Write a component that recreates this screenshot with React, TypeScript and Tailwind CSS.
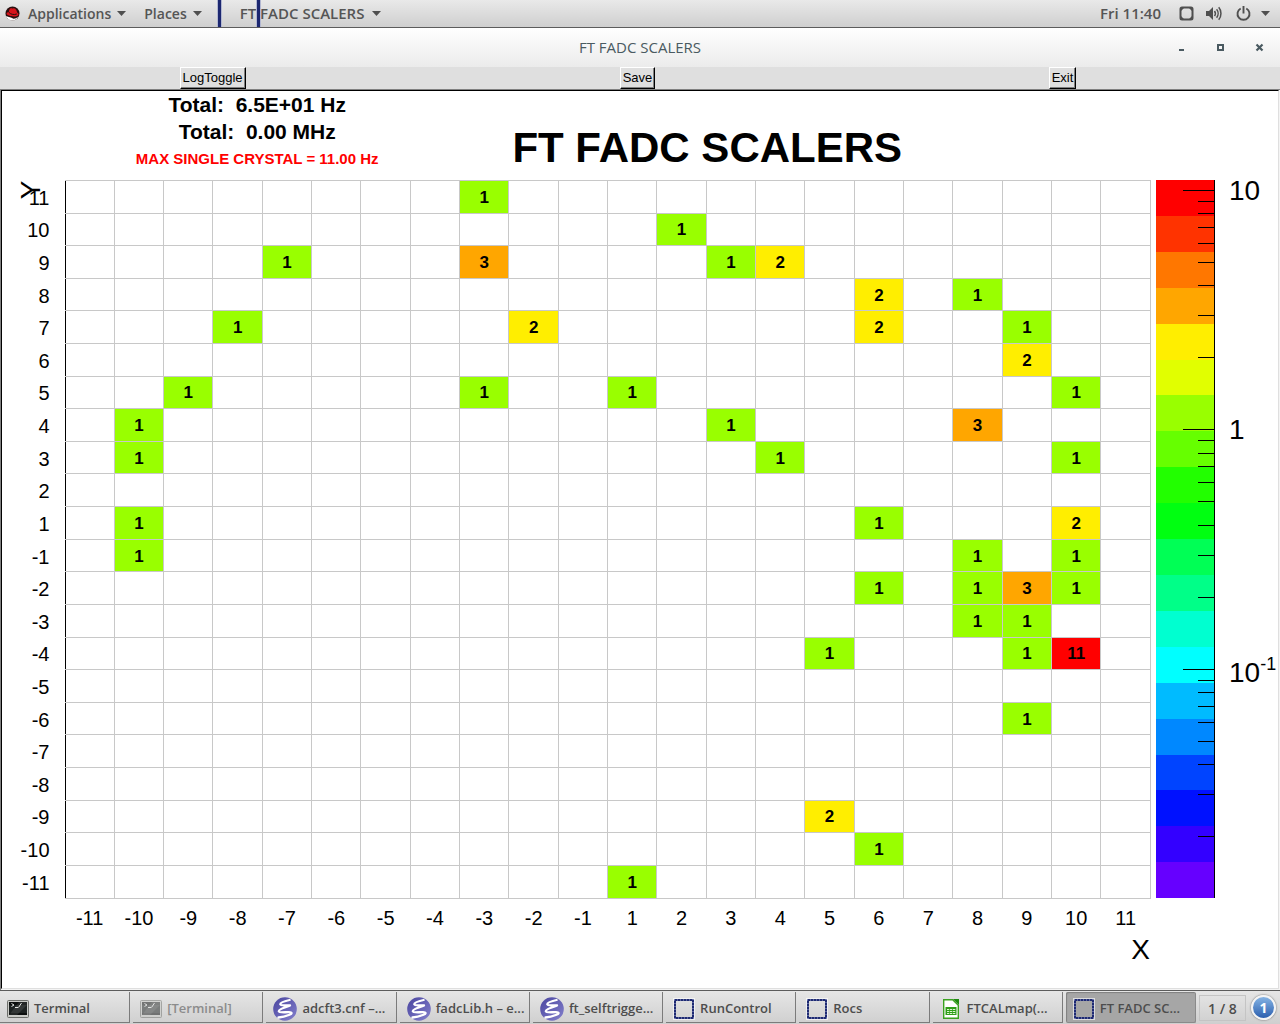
import React from "react";

const AXIS = [-11, -10, -9, -8, -7, -6, -5, -4, -3, -2, -1, 1, 2, 3, 4, 5, 6, 7, 8, 9, 10, 11];
const ROWS = [...AXIS].reverse();

// rates[y][x] in Hz
const RATES: Record<number, Record<number, number>> = {
  11: { [-3]: 1 },
  10: { 2: 1 },
  9: { [-7]: 1, [-3]: 3, 3: 1, 4: 2 },
  8: { 6: 2, 8: 1 },
  7: { [-8]: 1, [-2]: 2, 6: 2, 9: 1 },
  6: { 9: 2 },
  5: { [-9]: 1, [-3]: 1, 1: 1, 10: 1 },
  4: { [-10]: 1, 3: 1, 8: 3 },
  3: { [-10]: 1, 4: 1, 10: 1 },
  1: { [-10]: 1, 6: 1, 10: 2 },
  [-1]: { [-10]: 1, 8: 1, 10: 1 },
  [-2]: { 6: 1, 8: 1, 9: 3, 10: 1 },
  [-3]: { 8: 1, 9: 1 },
  [-4]: { 5: 1, 9: 1, 10: 11 },
  [-6]: { 9: 1 },
  [-9]: { 5: 2 },
  [-10]: { 6: 1 },
  [-11]: { 1: 1 },
};

const FILL: Record<number, string> = {
  1: "bg-[#99ff00]",
  2: "bg-[#ffee00]",
  3: "bg-[#ffa600]",
  11: "bg-[#ff0000]",
};

const BANDS = [
  "bg-[#ff0000]", "bg-[#ff3300]", "bg-[#ff7700]", "bg-[#ffa600]", "bg-[#ffee00]",
  "bg-[#e1ff00]", "bg-[#99ff00]", "bg-[#66ff00]", "bg-[#22ff00]", "bg-[#00ff11]",
  "bg-[#00ff55]", "bg-[#00ff88]", "bg-[#00ffd0]", "bg-[#00ffff]", "bg-[#00bbff]",
  "bg-[#0088ff]", "bg-[#0044ff]", "bg-[#0011ff]", "bg-[#3300ff]", "bg-[#6600ff]",
];

// Logarithmic scale: the bar starts just above 11 Hz and spans three decades.
const TOP = 1.044;
const place = (v: number) => ((TOP - Math.log10(v)) / 3) * 100;
const TICKS = [10, 1, 0.1]
  .flatMap((d) => [10, 9, 8, 7, 6, 5, 4, 3, 2].map((m) => ({ v: (d * m) / 10, major: m === 10 })))
  .filter((t) => place(t.v) < 100);

function Caret() {
  return (
    <svg className="h-[5px] w-[9px]" viewBox="0 0 9 5" aria-hidden="true">
      <path d="M0 0h9L4.500 5z" fill="#4f4f4f" />
    </svg>
  );
}

function RedHat() {
  return (
    <svg className="h-[15px] w-[15px]" viewBox="0 0 15 15" aria-hidden="true">
      <circle cx="7.500" cy="7.500" r="7" fill="#2a1010" />
      <path d="M1 10c3 1.600 5 1 7 2.500 1.500.6 3.500-.5 5-1.500-1 2-3 3.500-5.500 3.500S2 13 1 10z" fill="#fff" />
      <path d="M1.500 7.500c.4-1 1.400-1.500 2.300-1.300C4 4 4.800 1.800 6.500 2.300c.8.300 1.200.1 2-.1 2-.5 3.300 2 3.600 4.300 1.300.7 2 2 .9 2.900-2.500 2-11 .8-11.500-1.900z" fill="#d8141c" />
      <path d="M3.800 6.200c1.600 2.100 5 3 8 1.800" stroke="#2a1010" strokeWidth="1" fill="none" />
    </svg>
  );
}

function TerminalIcon() {
  return (
    <svg className="h-[20px] w-[22px] shrink-0" viewBox="0 0 22 20" aria-hidden="true">
      <rect x=".5" y="1.500" width="21" height="17" rx="1" fill="#c9cac6" stroke="#6d6f6b" />
      <rect x="2" y="3" width="18" height="13" fill="#0c0f0e" />
      <path d="M2 7h18M2 9h18M2 11h18M2 13h18" stroke="#2f3735" strokeWidth="1" />
      <path d="M12 3h8v3l-10 10H2z" fill="#fff" opacity=".1" />
      <path d="M4.500 4.500l2.500 1.500-2.500 1.500M8 8.500h3M11.500 8.500l3-4.500" stroke="#e6e8e6" strokeWidth="1" fill="none" />
    </svg>
  );
}

function EmacsIcon() {
  return (
    <svg className="h-[24px] w-[24px] shrink-0" viewBox="0 0 24 24" aria-hidden="true">
      <defs>
        <linearGradient id="emacs" x1="0" y1="0" x2="1" y2="1">
          <stop offset="0" stopColor="#4a459f" />
          <stop offset="1" stopColor="#8380cc" />
        </linearGradient>
      </defs>
      <circle cx="12" cy="12" r="11.800" fill="url(#emacs)" />
      <path
        d="M16.500 3C12 4 7 5.500 7.300 7.400c.3 1.700 6 .6 9.700 1.100C13 9.800 5.500 12 5.800 14.300c.2 1.600 6 .8 10.200.9 3.800.1 3 1.500.5 2.500-2.800 1.100-6.500 2.300-11 2.800"
        fill="none"
        stroke="#fff"
        strokeWidth="2.300"
        strokeLinecap="round"
        strokeLinejoin="round"
      />
    </svg>
  );
}

function WindowIcon() {
  return (
    <svg className="h-[22px] w-[22px] shrink-0" viewBox="0 0 22 22" aria-hidden="true">
      <rect x=".5" y=".5" width="21" height="21" fill="none" stroke="#fff" strokeOpacity=".6" />
      <rect x="2" y="2" width="18" height="18" fill="none" stroke="#9aa0cc" strokeWidth="2" />
      <rect x="2" y="2" width="18" height="18" fill="none" stroke="#1f2a72" strokeWidth="2" strokeDasharray="2 1" />
      <rect x="2" y="2" width="18" height="18" fill="none" stroke="#1f2a72" strokeWidth="1" />
    </svg>
  );
}

function CalcIcon() {
  return (
    <svg className="h-[20px] w-[22px] shrink-0" viewBox="0 0 22 20" aria-hidden="true">
      <path d="M3.700.7h9l5.600 5.600v13H3.700z" fill="#fff" stroke="#3aa21f" strokeWidth="1.400" />
      <path d="M13 0h6v6z" fill="#1f8a10" />
      <path d="M5.500 8h11v8h-11z" fill="#2f9e18" />
      <path d="M7 10h2.300v1H7zM10 10h2.300v1H10zM13 10h2.300v1H13zM7 12h2.300v1H7zM10 12h2.300v1H10zM13 12h2.300v1H13zM7 14h2.300v1H7zM10 14h2.300v1H10zM13 14h2.300v1H13z" fill="#d9f5cf" />
    </svg>
  );
}

const TASKS = [
  { label: "Terminal", icon: TerminalIcon, state: "" },
  { label: "[Terminal]", icon: TerminalIcon, state: "min" },
  { label: "adcft3.cnf –...", icon: EmacsIcon, state: "" },
  { label: "fadcLib.h – e...", icon: EmacsIcon, state: "" },
  { label: "ft_selftrigge...", icon: EmacsIcon, state: "" },
  { label: "RunControl", icon: WindowIcon, state: "" },
  { label: "Rocs", icon: WindowIcon, state: "" },
  { label: "FTCALmap(...", icon: CalcIcon, state: "" },
  { label: "FT FADC SC...", icon: WindowIcon, state: "active" },
];

function TopPanel() {
  return (
    <header className="flex h-7 items-center border-b border-[#5c5c5c] bg-linear-to-b from-[#e9e9e9] to-[#cfcfcf] text-[14px] font-semibold text-[#555555]">
      <button type="button" className="ml-[5px] flex items-center gap-[6px]">
        <RedHat />
        <span className="ml-[2px]">Applications</span>
        <Caret />
      </button>
      <button type="button" className="ml-[18px] flex items-center gap-[6px]">
        Places
        <Caret />
      </button>
      <button type="button" className="relative ml-[38px] flex h-full items-center gap-2 text-[15px]">
        FT FADC SCALERS
        <Caret />
        <span className="absolute inset-y-0 -left-[23px] flex w-[44px] justify-between" aria-hidden="true">
          <span className="w-[5px] border-x border-[#b3b8d2] bg-[#1c2770]" />
          <span className="w-[5px] border-x border-[#b3b8d2] bg-[#1c2770]" />
        </span>
      </button>
      <div className="mr-[10px] ml-auto flex items-center">
        <time className="mr-[18px] text-[15px]">Fri 11:40</time>
        <svg className="mr-3 h-[15px] w-[15px]" viewBox="0 0 15 15" aria-hidden="true">
          <rect x="1.500" y="1.500" width="12" height="12" rx="1.500" fill="none" stroke="#4f4f4f" strokeWidth="2" />
          <path d="M2 2h3L2 5zM13 2h-3l3 3zM2 13v-3l3 3zM13 13v-3l-3 3z" fill="#4f4f4f" />
        </svg>
        <svg className="mr-[14px] h-[15px] w-[16px]" viewBox="0 0 16 15" fill="none" stroke="#4f4f4f" aria-hidden="true">
          <path d="M0 5h3l4-4v13L3 10H0z" fill="#4f4f4f" stroke="none" />
          <path d="M8.500 5c1 1.400 1 3.600 0 5M10.600 3.300c2 2.400 2 6 0 8.400M12.700 1.300c3 3.400 3 9 0 12.400" strokeWidth="1.500" />
        </svg>
        <svg className="mr-[10px] h-[15px] w-[15px]" viewBox="0 0 15 15" fill="none" stroke="#4f4f4f" strokeWidth="1.900" aria-hidden="true">
          <path d="M4.700 2.500a6 6 0 1 0 5.600 0M7.500 0v7.500" />
        </svg>
        <Caret />
      </div>
    </header>
  );
}

function TitleBar() {
  return (
    <div className="relative flex h-[39px] items-center justify-center bg-linear-to-b from-white to-[#ebebeb]">
      <h1 className="text-[15px] font-medium text-[#4a5a61]">FT FADC SCALERS</h1>
      <div className="absolute inset-y-0 right-4 flex items-center gap-[30px]">
        <button type="button" aria-label="Minimize">
          <svg className="h-[9px] w-[9px]" viewBox="0 0 9 9"><path d="M2 6h5v2H2z" fill="#4a5a61" /></svg>
        </button>
        <button type="button" aria-label="Maximize">
          <svg className="h-[9px] w-[9px]" viewBox="0 0 9 9"><path d="M2 2h5v5H2z" fill="none" stroke="#4a5a61" strokeWidth="2" /></svg>
        </button>
        <button type="button" aria-label="Close">
          <svg className="h-[9px] w-[9px]" viewBox="0 0 9 9"><path d="M1.500 1.500l6 6M7.500 1.500l-6 6" stroke="#4a5a61" strokeWidth="2.200" /></svg>
        </button>
      </div>
    </div>
  );
}

function ToolBar() {
  return (
    <div className="grid h-[23px] grid-cols-3 border-b border-[#808080] bg-[#dfdfdf] pr-[5px]">
      {["LogToggle", "Save", "Exit"].map((name) => (
        <button
          key={name}
          type="button"
          className="h-[22px] justify-self-center border border-t-white border-r-black border-b-black border-l-white bg-[#dfdfdf] px-[2px] font-['Liberation_Sans',sans-serif] text-[13px] leading-5 text-black shadow-[inset_-1px_-1px_0_#808080]"
        >
          {name}
        </button>
      ))}
    </div>
  );
}

function HitMap() {
  return (
    <table className="w-full min-w-0 flex-1 table-fixed border-collapse text-center text-[20px] leading-6">
      <colgroup>
        <col className="w-[63px]" />
        {AXIS.map((x) => <col key={x} />)}
      </colgroup>
      <tbody>
        {ROWS.map((y) => (
          <tr key={y}>
            <th scope="row" className="p-0 pt-[2px] pr-[15px] text-right font-normal">{y}</th>
            {AXIS.map((x, i) => {
              const v = RATES[y]?.[x];
              return (
                <td
                  key={x}
                  className={`border border-[#c8c8c8] p-0 pt-[2px] text-[17px] leading-4 font-bold ${i === 0 ? "border-l-black" : ""} ${v ? FILL[v] : ""}`}
                >
                  {v}
                </td>
              );
            })}
          </tr>
        ))}
      </tbody>
      <tfoot>
        <tr className="h-10">
          <td />
          {AXIS.map((x) => <th key={x} scope="col" className="p-0 font-normal">{x}</th>)}
        </tr>
      </tfoot>
    </table>
  );
}

function ColorScale() {
  return (
    <div className="mb-10 ml-[5px] flex shrink-0">
      <div className="relative flex w-[59px] flex-col border-r border-black">
        {BANDS.map((c) => <div key={c} className={`flex-1 ${c}`} />)}
        <svg className="absolute inset-0 h-full w-full" aria-hidden="true">
          {TICKS.map((t) => (
            <line
              key={t.v}
              x1={t.major ? 27 : 42}
              x2="58"
              y1={`${place(t.v)}%`}
              y2={`${place(t.v)}%`}
              stroke="#000"
              shapeRendering="crispEdges"
            />
          ))}
        </svg>
      </div>
      <div className="relative w-[63px] pl-[14px] text-[28px] leading-8">
        <span className="absolute -translate-y-1/2" style={{ top: `${place(10)}%` }}>10</span>
        <span className="absolute -translate-y-1/2" style={{ top: `${place(1)}%` }}>1</span>
        <span className="absolute -translate-y-3 whitespace-nowrap" style={{ top: `${place(0.1)}%` }}>
          10<sup className="-top-3 text-[18px]">-1</sup>
        </span>
      </div>
    </div>
  );
}

function Canvas() {
  return (
    <main className="mr-px flex flex-1 flex-col border border-t-black border-r-[#dfdfdf] border-b-[#dfdfdf] border-l-black bg-white pb-[26px] font-['Liberation_Sans',sans-serif] text-black">
      <div className="grid h-[89px] grid-cols-[2fr_3fr]">
        <div className="text-center text-[21px] leading-[27px] font-bold whitespace-pre">
          <p>Total:  6.5E+01 Hz</p>
          <p>Total:  0.00 MHz</p>
          <p className="text-[15px] leading-[27px] text-[#ff0000]">MAX SINGLE CRYSTAL = 11.00 Hz</p>
        </div>
        <h2 className="pt-[33px] text-[42px] leading-[48px] font-bold whitespace-nowrap">FT FADC SCALERS</h2>
      </div>
      <div className="relative flex flex-1">
        <HitMap />
        <ColorScale />
        <span className="absolute top-0 left-5 -rotate-90 text-[28px] leading-5">Y</span>
      </div>
      <p className="mr-[128px] text-right text-[28px] leading-6">X</p>
    </main>
  );
}

function TaskBar() {
  return (
    <nav className="flex h-[34px] items-stretch gap-[3px] border-t border-[#5c5c5c] bg-linear-to-b from-[#e6e6e6] to-[#cfcfcf] pt-px pr-1 text-[13px] font-semibold text-[#4d4d4d]">
      {TASKS.map(({ label, icon: Icon, state }) => (
        <button
          key={label}
          type="button"
          className={`mb-px flex min-w-0 flex-1 items-center gap-[5px] border-r border-b pt-[3px] pl-[7px] whitespace-nowrap ${
            state === "active"
              ? "rounded-xs border-[#8a8a8a] bg-[#a6a6a6] shadow-[inset_1px_1px_1px_#808080]"
              : "border-[#7b7b7b]"
          } ${state === "min" ? "text-[#8c8c8c]" : ""}`}
        >
          <span className={`shrink-0 ${state === "min" ? "opacity-50" : ""}`}><Icon /></span>
          {label}
        </button>
      ))}
      <button type="button" className="my-[3px] w-[47px] border border-[#c4c4c4] text-[14px]">1 / 8</button>
      <button
        type="button"
        className="mt-[3px] ml-[2px] h-[25px] w-[25px] rounded-full border-2 border-[#f4f4f4] bg-linear-to-b from-[#86b4e4] to-[#2c5fae] text-[14px] leading-5 font-bold text-white shadow-[0_0_2px_#555555]"
      >
        1
      </button>
    </nav>
  );
}

export default function App() {
  return (
    <div className="flex min-h-screen flex-col bg-[#f4f4f4] font-['Open_Sans',sans-serif]">
      <TopPanel />
      <div className="flex flex-1 flex-col">
        <TitleBar />
        <ToolBar />
        <div className="flex flex-1 flex-col border-l border-[#808080] pb-px">
          <Canvas />
        </div>
      </div>
      <TaskBar />
    </div>
  );
}
